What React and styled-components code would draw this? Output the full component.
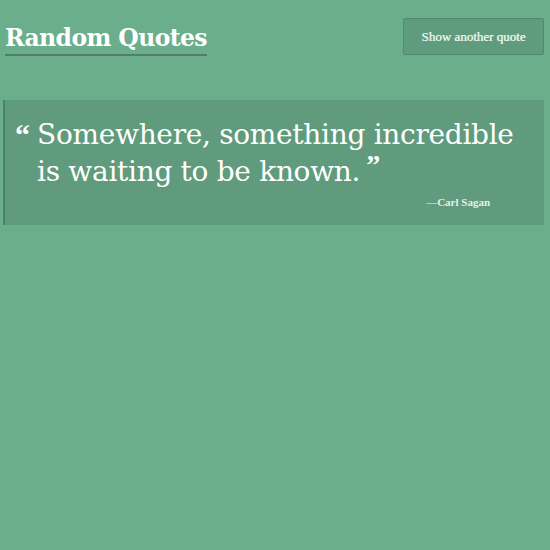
import React from "react";
import styled, { createGlobalStyle } from "styled-components";

const Global = createGlobalStyle`
  html, body { margin: 0; padding: 0; background: #6aae8b; }
  body { font-family: "DejaVu Serif", "Liberation Serif", serif; color: #fff; }
`;

const Page = styled.div`
  width: 550px;
  height: 550px;
  background: #6aae8b;
  box-sizing: border-box;
  padding: 18px 6px 0 3px;
`;

const Header = styled.header`
  display: flex;
  justify-content: space-between;
  align-items: flex-start;
  padding-left: 2px;
`;

const Title = styled.h1`
  margin: 6px 0 0 0;
  font-family: "DejaVu Serif", serif;
  font-size: 23.5px;
  font-weight: 700;
  line-height: 29px;
  padding-bottom: 1px;
  border-bottom: 2px solid #4e7f68;
  color: #fff;
  letter-spacing: -0.6px;
`;

const Button = styled.button`
  width: 141px;
  height: 37px;
  background: #5f9c7d;
  border: 1px solid #4f8a6c;
  border-radius: 2px;
  color: #e6efe9;
  font-family: "Liberation Serif", serif;
  font-size: 13px;
  font-weight: 400;
  cursor: pointer;
  padding: 0;
  text-shadow: 0.3px 0 0 #e6efe9;
`;

const QuoteBox = styled.blockquote`
  margin: 44px 0 0 0;
  background: #5f9b7c;
  border-left: 2px solid #4b8266;
  padding: 16px 20px 14px 10px;
  height: 125px;
  box-sizing: border-box;
`;

const QuoteText = styled.p`
  margin: 0;
  font-family: "DejaVu Serif", serif;
  font-size: 28px;
  line-height: 37px;
  color: #fff;
  padding-left: 22px;
  max-width: 490px;
  position: relative;
  letter-spacing: -0.3px;
`;

const OpenMark = styled.span`
  font-family: "Liberation Serif", serif;
  font-size: 30px;
  font-weight: 700;
  position: absolute;
  left: 0;
  top: 4px;
  line-height: 1;
`;

const CloseMark = styled.span`
  font-family: "Liberation Serif", serif;
  font-size: 28px;
  font-weight: 700;
  line-height: 0;
  vertical-align: 7px;
  margin-left: 6px;
`;

const Author = styled.cite`
  display: block;
  text-align: right;
  font-style: normal;
  font-family: "Liberation Serif", serif;
  font-size: 11px;
  font-weight: 700;
  color: #e6f0ea;
  margin-top: 6px;
  padding-right: 34px;
`;

export default function App() {
  return (
    <>
      <Global />
      <Page>
        <Header>
          <Title>Random Quotes</Title>
          <Button>Show another quote</Button>
        </Header>
        <QuoteBox>
          <QuoteText>
            <OpenMark>“</OpenMark>Somewhere, something incredible is waiting to be known.
            <CloseMark>”</CloseMark>
          </QuoteText>
          <Author>—Carl Sagan</Author>
        </QuoteBox>
      </Page>
    </>
  );
}
